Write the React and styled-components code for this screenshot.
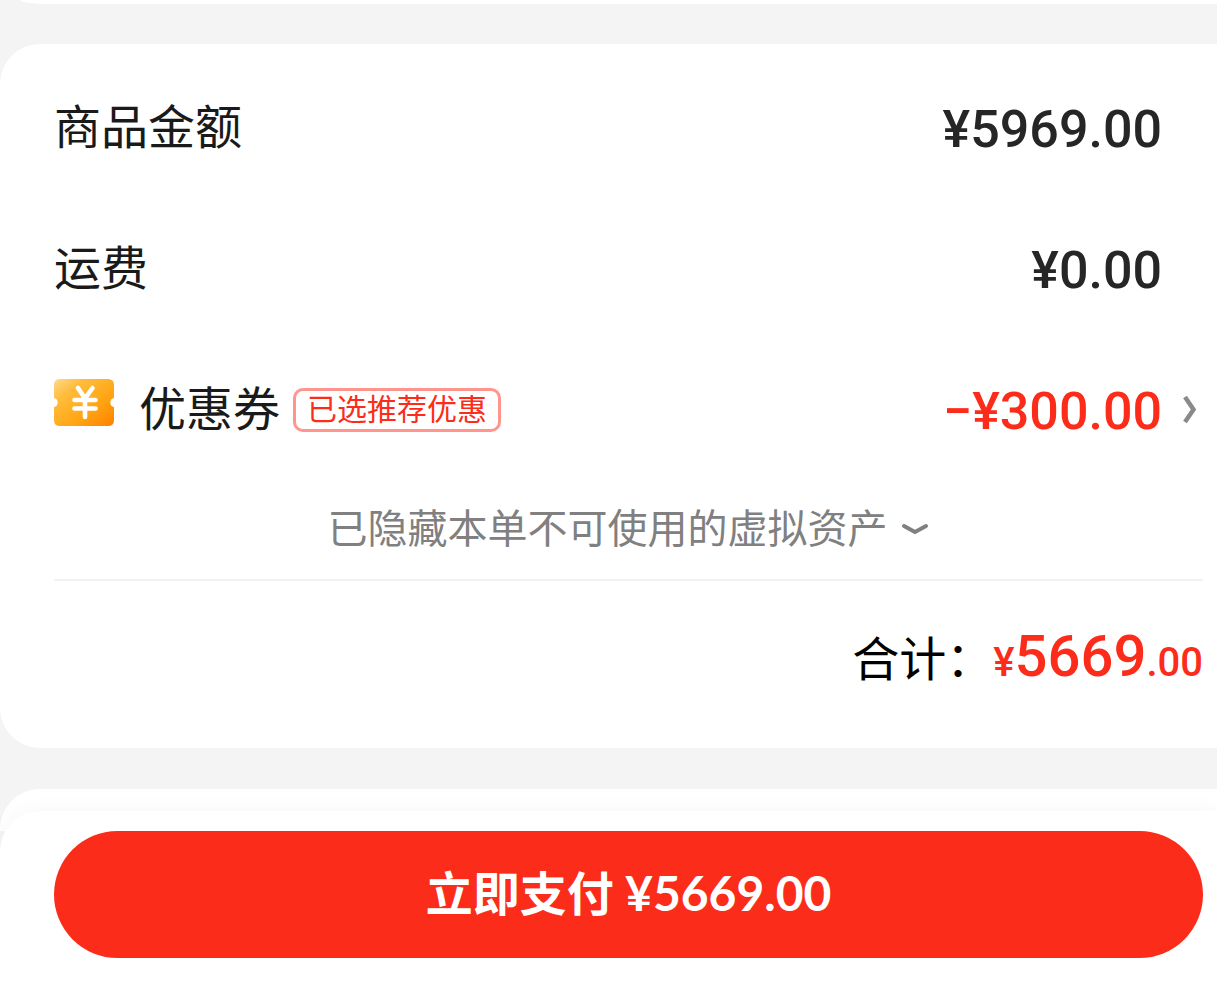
import React from 'react';
import styled, { createGlobalStyle } from 'styled-components';

const red = '#fc2c1b';
const cjk = '"Noto Sans CJK SC", sans-serif';

const GlobalStyle = createGlobalStyle`
  *, *::before, *::after { box-sizing: border-box; }
  body {
    margin: 0;
    background: #f4f4f4;
    color: #1a1a1a;
    font-family: ${cjk};
  }
  button { font: inherit; color: inherit; border: 0; background: none; padding: 0; cursor: pointer; }
`;

const Page = styled.main`
  display: flex;
  flex-direction: column;
  min-height: 100vh;
`;

const PreviousCard = styled.div`
  height: 4px;
  margin-left: 20px;
  background: #fff;
  border-radius: 0 0 0 28px / 0 0 0 4px;
`;

const Card = styled.section`
  margin: 40px 0 41px;
  padding: 13px 14px 9px 54px;
  background: #fff;
  border-radius: 40px 0 0 40px;
`;

const NextCard = styled.div`
  height: 42px;
  background: #fff;
  border-radius: 40px 0 0 0;
`;

const Row = styled.div`
  display: flex;
  align-items: center;
  justify-content: space-between;
  height: 141px;
`;

const Label = styled.span`
  display: flex;
  align-items: center;
  padding-bottom: 8px;
  font-size: 47px;
  line-height: 68px;
`;

const CouponIcon = styled.svg`
  width: 60px;
  height: 48px;
  margin: 0 25px 6px 0;
`;

const Badge = styled.span`
  margin: 8px 0 0 13px;
  padding: 0 11px 6px;
  border: 3px solid #ff958c;
  border-radius: 10px;
  color: ${red};
  font-size: 30px;
  line-height: 32px;
`;

const Amount = styled.span`
  padding: 4px 41px 0 0;
  color: #262626;
  font-family: Roboto, ${cjk};
  font-size: 52px;
  font-weight: 500;
  line-height: 60px;
`;

const CouponAmount = styled.button`
  display: flex;
  align-items: center;
  padding-right: 6px;
`;

const Discount = styled(Amount)`
  padding-right: 21px;
  color: ${red};
`;

const Notice = styled.button`
  && {
    display: flex;
    align-items: center;
    justify-content: center;
    width: 100%;
    height: 99px;
    padding-bottom: 8px;
    color: #808080;
    font-size: 40px;
    line-height: 60px;
  }
`;

const DownIcon = styled.svg`
  width: 30px;
  height: 18px;
  margin: 4px 0 0 12px;
`;

const Total = styled.div`
  display: flex;
  align-items: baseline;
  justify-content: flex-end;
  padding: 35px 0 36px;
  border-top: 2px solid #f2f2f2;
  color: #000;
  font-size: 47px;
  line-height: 80px;
`;

const TotalAmount = styled.span`
  color: ${red};
  font-family: Roboto, ${cjk};
  font-size: 40px;
  font-weight: 500;
`;

const Whole = styled.span`
  font-size: 58px;
`;

const PayBar = styled.footer`
  position: sticky;
  bottom: 0;
  flex: 1;
  margin-top: -20px;
  padding: 20px 14px 37px 54px;
  background: #fff;
  border-radius: 40px 0 0 0;
  box-shadow: 0 0 22px rgba(0, 0, 0, 0.04);
`;

const PayButton = styled.button`
  && {
    display: block;
    width: 100%;
    height: 127px;
    padding-bottom: 8px;
    border-radius: 64px;
    background: ${red};
    color: #fff;
    font-family: Lato, ${cjk};
    font-size: 47px;
    font-weight: 700;
  }
`;

const PayAmount = styled.span`
  font-size: 48px;
`;

export default function App() {
  return (
    <>
      <GlobalStyle />
      <Page lang="zh-CN">
        <PreviousCard />
        <Card>
          <Row>
            <Label>商品金额</Label>
            <Amount>¥5969.00</Amount>
          </Row>
          <Row>
            <Label>运费</Label>
            <Amount>¥0.00</Amount>
          </Row>
          <Row>
            <Label>
              <CouponIcon viewBox="0 0 60 48" aria-hidden="true">
                <defs>
                  <linearGradient id="coupon" x1="0" y1="0" x2="1" y2="1">
                    <stop offset="0" stopColor="#ffd98c" />
                    <stop offset="0.25" stopColor="#ffbd3d" />
                    <stop offset="0.65" stopColor="#ffa412" />
                    <stop offset="1" stopColor="#ff8000" />
                  </linearGradient>
                </defs>
                <path
                  d="M6 0H54Q60 0 60 6V19A4.6 4.6 0 0 0 60 28V41Q60 47 54 47H6Q0 47 0 41V28A4.6 4.6 0 0 0 0 19V6Q0 0 6 0Z"
                  fill="url(#coupon)"
                />
                <path
                  d="M24 9L31 19.500L38.500 9M20.500 21H41.500M20.500 29.500H41.500M31 20V38"
                  fill="none"
                  stroke="#fff"
                  strokeWidth="4.600"
                  strokeLinecap="round"
                  strokeLinejoin="round"
                />
              </CouponIcon>
              优惠券
              <Badge>已选推荐优惠</Badge>
            </Label>
            <CouponAmount type="button">
              <Discount>−¥300.00</Discount>
              <svg width="14" height="28" viewBox="0 0 14 28" aria-hidden="true">
                <path d="M2 1L10.500 13.500L2 26" fill="none" stroke="#8a8a8a" strokeWidth="4.500" />
              </svg>
            </CouponAmount>
          </Row>
          <Notice type="button">
            已隐藏本单不可使用的虚拟资产
            <DownIcon viewBox="0 0 30 18" aria-hidden="true">
              <path
                d="M4 7L15 13L26 7"
                fill="none"
                stroke="#808080"
                strokeWidth="4"
                strokeLinecap="round"
                strokeLinejoin="round"
              />
            </DownIcon>
          </Notice>
          <Total>
            <span>合计：</span>
            <TotalAmount>
              ¥<Whole>5669</Whole>.00
            </TotalAmount>
          </Total>
        </Card>
        <NextCard />
        <PayBar>
          <PayButton type="button">
            立即支付 <PayAmount>¥5669.00</PayAmount>
          </PayButton>
        </PayBar>
      </Page>
    </>
  );
}
